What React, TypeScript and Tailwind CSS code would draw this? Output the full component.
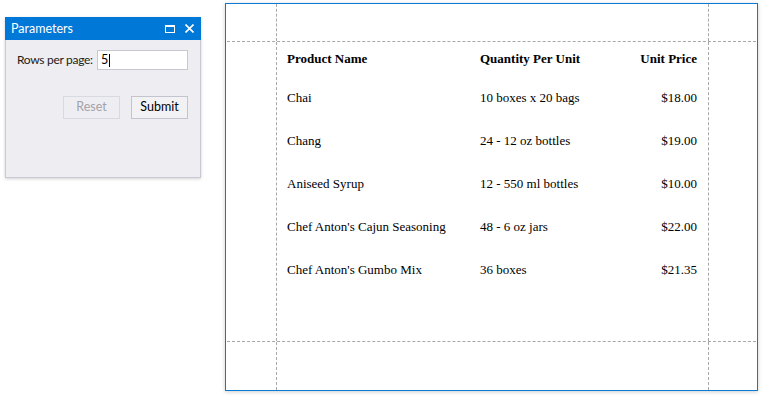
import React from "react";

const rows = [
  ["Chai", "10 boxes x 20 bags", "$18.00"],
  ["Chang", "24 - 12 oz bottles", "$19.00"],
  ["Aniseed Syrup", "12 - 550 ml bottles", "$10.00"],
  ["Chef Anton's Cajun Seasoning", "48 - 6 oz jars", "$22.00"],
  ["Chef Anton's Gumbo Mix", "36 boxes", "$21.35"],
];

const serif = { fontFamily: '"Liberation Serif", "Times New Roman", serif' };

export default function App() {
  return (
    <div className="w-[763px] h-[398px] bg-white flex items-start overflow-hidden">
      {/* Parameters dialog */}
      <div
        className="ml-[5px] mt-[17px] w-[196px] h-[161px] flex flex-col bg-[#eeeef2] border border-[#c9c9d4] shadow-[0_1px_3px_rgba(0,0,0,0.18)]"
        style={{ fontFamily: 'Lato, Roboto, "Noto Sans", sans-serif' }}
      >
        <div className="h-[23px] -mx-px -mt-px bg-[#0078d7] flex items-center pl-[6px] pr-[4px] text-white text-[12.5px]">
          <span className="flex-1 pt-[2px]">Parameters</span>
          <svg width="10" height="8" viewBox="0 0 10 8" className="mr-[10px]">
            <rect x="0.5" y="0.5" width="9" height="7" fill="none" stroke="white" strokeWidth="1" />
            <rect x="0" y="0" width="10" height="2" fill="white" />
          </svg>
          <svg width="9" height="9" viewBox="0 0 9 9" className="mr-[3px]">
            <path d="M0.5 0.5 L8.5 8.5 M8.5 0.5 L0.5 8.5" stroke="white" strokeWidth="1.6" />
          </svg>
        </div>
        <div className="flex items-center mt-[10px] pl-[11px]">
          <span className="shrink-0 text-[12px] tracking-[-0.3px] text-[#202020] w-[80px] whitespace-nowrap">Rows per page:</span>
          <div className="shrink-0 w-[91px] h-[20px] bg-white border border-[#c8c8d2] flex items-center pl-[3px] text-[12.5px] text-black">
            5<span className="inline-block w-px h-[13px] bg-black ml-px" />
          </div>
        </div>
        <div className="flex justify-end gap-[11px] mt-[26px] pr-[12px]">
          <div className="w-[57px] h-[23px] border border-[#d9d9e1] flex items-center justify-center text-[12.5px] text-[#a2a2a8]">
            Reset
          </div>
          <div className="w-[57px] h-[23px] border border-[#c4c4ce] bg-[#f2f2f5] flex items-center justify-center text-[12.5px] text-black">
            Submit
          </div>
        </div>
      </div>

      {/* Report page */}
      <div className="ml-[24px] mt-[3px] w-[533px] h-[388px] border border-[#0a7ad6] bg-white flex flex-col shadow-[0_1px_4px_rgba(0,0,0,0.2)]" style={serif}>
        <div className="h-[38px] mx-px flex border-b border-dashed border-[#a8a8a8]">
          <div className="w-[49px]" />
          <div className="w-[433px] border-x border-dashed border-[#a8a8a8]" />
          <div className="flex-1" />
        </div>
        <div className="h-[300px] mx-px flex border-b border-dashed border-[#a8a8a8]">
          <div className="w-[49px]" />
          <div className="w-[433px] border-x border-dashed border-[#a8a8a8] pl-[10px] pr-[11px] text-[13px] text-black">
            <div className="h-[34px] flex items-center font-bold">
              <div className="w-[193px]">Product Name</div>
              <div className="flex-1">Quantity Per Unit</div>
              <div className="text-right">Unit Price</div>
            </div>
            {rows.map((r) => (
              <div key={r[0]} className="h-[43px] flex items-center">
                <div className="w-[193px]">{r[0]}</div>
                <div className="flex-1">{r[1]}</div>
                <div className="text-right">{r[2]}</div>
              </div>
            ))}
          </div>
          <div className="flex-1" />
        </div>
        <div className="flex-1 mx-px flex">
          <div className="w-[49px]" />
          <div className="w-[433px] border-x border-dashed border-[#a8a8a8]" />
          <div className="flex-1" />
        </div>
      </div>
    </div>
  );
}
